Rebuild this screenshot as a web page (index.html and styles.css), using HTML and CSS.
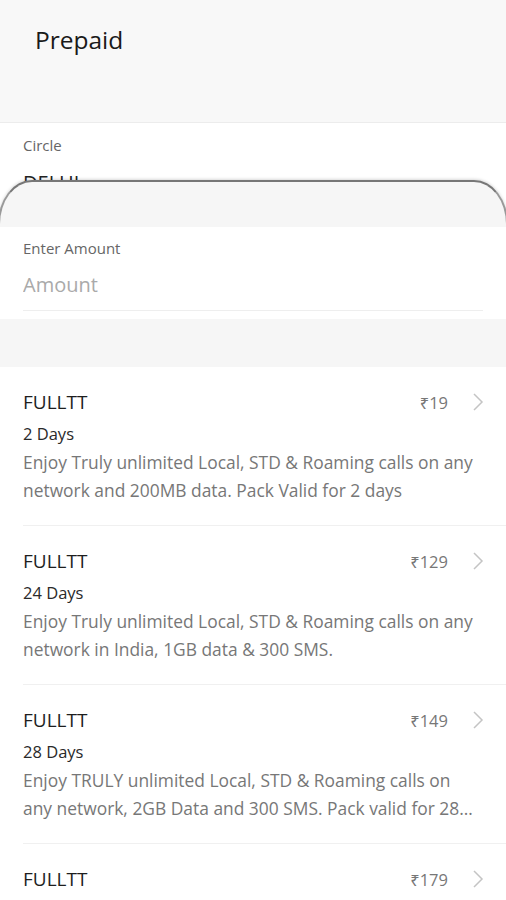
FILE: index.html
```html
<!DOCTYPE html>
<html lang="en">
<head>
    <meta charset="UTF-8">
    <meta name="viewport" content="width=device-width, initial-scale=1.0">
    <title>Prepaid</title>
    <link rel="stylesheet" href="styles.css">
</head>
<body>

<div class="header">
    <h1>Prepaid</h1>
</div>

<div class="field circle-field">
    <div class="field-label">Circle</div>
    <div class="field-value">DELHI</div>
    <!-- sheet edge sliding over the circle field -->
    <div class="sheet-edge"></div>
</div>

<div class="field amount-field">
    <label class="field-label" for="amount">Enter Amount</label>
    <input type="text" id="amount" class="amount-input" placeholder="Amount">
</div>

<div class="gap-band"></div>

<div class="plans">
    <div class="plan">
        <div class="plan-top">
            <span class="plan-name">FULLTT</span>
            <span class="plan-price">₹19</span>
            <svg class="chevron" viewBox="0 0 12 20" width="12" height="20"><path d="M2 2l8 8-8 8" fill="none" stroke="#c4c4c4" stroke-width="1.5"/></svg>
        </div>
        <div class="plan-validity">2 Days</div>
        <div class="plan-desc">Enjoy Truly unlimited Local, STD &amp; Roaming calls on any network and 200MB data. Pack Valid for 2 days</div>
    </div>
    <div class="plan">
        <div class="plan-top">
            <span class="plan-name">FULLTT</span>
            <span class="plan-price">₹129</span>
            <svg class="chevron" viewBox="0 0 12 20" width="12" height="20"><path d="M2 2l8 8-8 8" fill="none" stroke="#c4c4c4" stroke-width="1.5"/></svg>
        </div>
        <div class="plan-validity">24 Days</div>
        <div class="plan-desc">Enjoy Truly unlimited Local, STD &amp; Roaming calls on any network in India, 1GB data &amp; 300 SMS.</div>
    </div>
    <div class="plan">
        <div class="plan-top">
            <span class="plan-name">FULLTT</span>
            <span class="plan-price">₹149</span>
            <svg class="chevron" viewBox="0 0 12 20" width="12" height="20"><path d="M2 2l8 8-8 8" fill="none" stroke="#c4c4c4" stroke-width="1.5"/></svg>
        </div>
        <div class="plan-validity">28 Days</div>
        <div class="plan-desc">Enjoy TRULY unlimited Local, STD &amp; Roaming calls on any network, 2GB Data and 300 SMS. Pack valid for 28 days</div>
    </div>
    <div class="plan">
        <div class="plan-top">
            <span class="plan-name">FULLTT</span>
            <span class="plan-price">₹179</span>
            <svg class="chevron" viewBox="0 0 12 20" width="12" height="20"><path d="M2 2l8 8-8 8" fill="none" stroke="#c4c4c4" stroke-width="1.5"/></svg>
        </div>
    </div>
</div>

</body>
</html>
```

FILE: styles.css
```css
body {
    margin: 0;
    font-family: "Open Sans", "Noto Sans", sans-serif;
    background-color: #ffffff;
    color: #222;
    overflow: hidden;
}
.header {
    height: 123px;
    background-color: #f8f8f8;
    border-bottom: 1px solid #ececec;
    padding: 23px 0 0 35px;
    box-sizing: border-box;
}
.header h1 {
    margin: 0;
    font-size: 24.5px;
    font-weight: 400;
    color: #1a1a1a;
    line-height: 34px;
}
.field {
    background-color: #fff;
    padding: 0 23px;
}
.circle-field {
    position: relative;
    height: 104px;
    padding-top: 11px;
    box-sizing: border-box;
    overflow: hidden;
}
.field-label {
    display: block;
    font-size: 15px;
    color: #666;
    line-height: 22px;
}
.field-value {
    margin-top: 14px;
    font-size: 20px;
    color: #222;
    line-height: 26px;
}
.sheet-edge {
    position: absolute;
    left: -2px;
    right: -2px;
    top: 57px;
    height: 80px;
    background-color: #f6f6f6;
    border-top: 2px solid #777;
    border-left: 2px solid #999;
    border-right: 2px solid #999;
    border-radius: 34px 34px 0 0 / 44px 44px 0 0;
    box-shadow: 0 -1px 3px rgba(0,0,0,0.15);
}
.amount-field {
    height: 92px;
    padding-top: 10px;
    box-sizing: border-box;
}
.amount-input {
    display: block;
    width: 100%;
    margin-top: 12px;
    padding: 0 0 11px 0;
    border: none;
    border-bottom: 1px solid #eeeeee;
    font-family: inherit;
    font-size: 20px;
    line-height: 28px;
    outline: none;
    box-sizing: border-box;
}
.amount-input::placeholder {
    color: #aaa;
}
.gap-band {
    height: 48px;
    background-color: #f6f6f6;
}
.plans {
    background-color: #fff;
}
.plan {
    height: 159px;
    margin-left: 23px;
    padding: 22px 22px 0 0;
    box-sizing: border-box;
    border-bottom: 1px solid #f0f0f0;
}
.plan-top {
    display: flex;
    align-items: center;
    height: 26px;
}
.plan-name {
    flex: 1;
    font-size: 19px;
    color: #1e1e1e;
}
.plan-price {
    font-size: 16.5px;
    color: #777;
    margin-right: 24px;
}
.chevron {
    display: block;
}
.plan-validity {
    margin-top: 7px;
    font-size: 16.5px;
    color: #2a2a2a;
    line-height: 24px;
}
.plan-desc {
    margin-top: 2px;
    font-size: 17.4px;
    color: #777;
    line-height: 28px;
    display: -webkit-box;
    -webkit-line-clamp: 2;
    -webkit-box-orient: vertical;
    overflow: hidden;
}
```
